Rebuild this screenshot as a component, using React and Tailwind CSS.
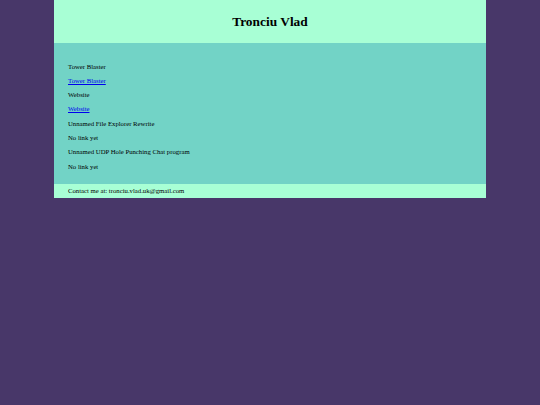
export default function App() {
  const items = [
    { t: "Tower Blaster" },
    { t: "Tower Blaster", link: true },
    { t: "Website" },
    { t: "Website", link: true },
    { t: "Unnamed File Explorer Rewrite" },
    { t: "No link yet" },
    { t: "Unnamed UDP Hole Punching Chat program" },
    { t: "No link yet" },
  ];
  return (
    <div className="w-[540px] h-[405px] bg-[#483769] overflow-hidden" style={{ fontFamily: '"Liberation Serif", "Times New Roman", serif' }}>
      <div className="mx-auto w-[432px] text-black">
        <div className="h-[43px] bg-[#a8ffd5] flex items-center justify-center">
          <h1 className="text-[13.4px] font-bold leading-none">Tronciu Vlad</h1>
        </div>
        <div className="h-[141px] bg-[#72d3c6] pl-[14px] pt-[19.5px] flex flex-col gap-[6.3px]">
          {items.map((it, i) => (
            <p key={i} className="h-[8px] leading-[8px] text-[6.72px]">
              {it.link ? <a href="#" className="text-[#0000ee] underline">{it.t}</a> : it.t}
            </p>
          ))}
        </div>
        <div className="h-[14px] bg-[#a8ffd5] pl-[14px] flex items-center text-[6.72px]">
          Contact me at: tronciu.vlad.uk@gmail.com
        </div>
      </div>
    </div>
  );
}
